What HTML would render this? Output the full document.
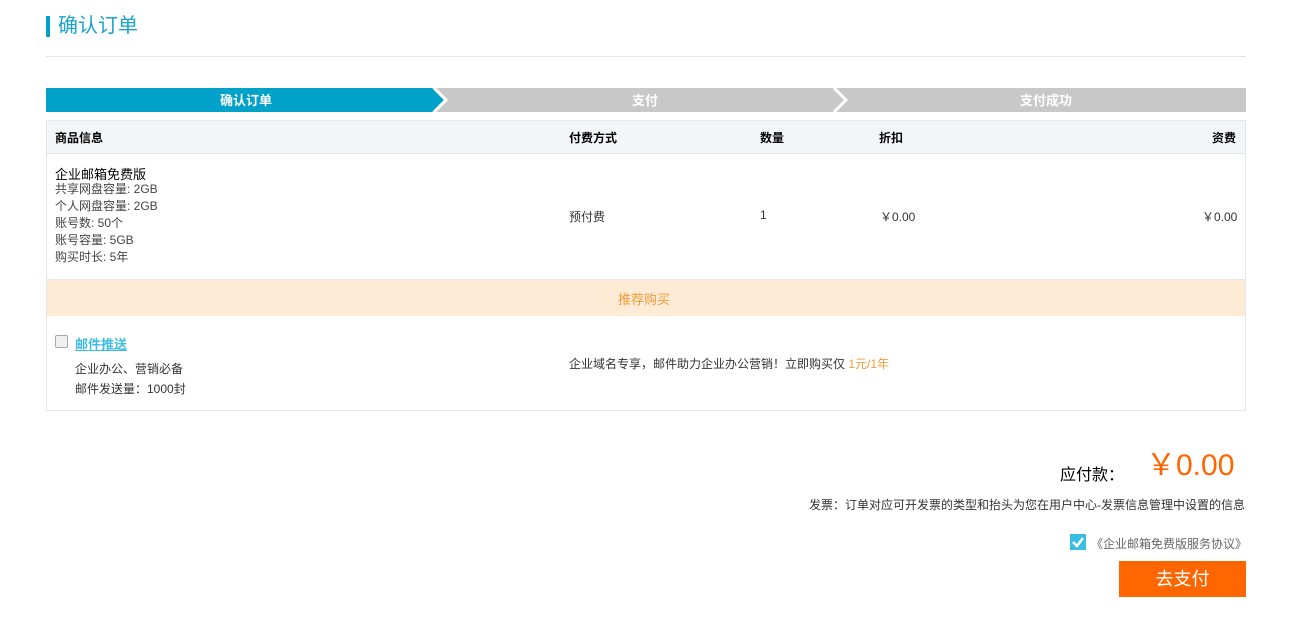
<!DOCTYPE html>
<html><head><meta charset="utf-8"><style>
*{margin:0;padding:0;box-sizing:border-box}
body{width:1297px;height:625px;background:#fff;font-family:"Liberation Sans","Noto Sans CJK SC",sans-serif;font-size:12px;color:#333;position:relative;overflow:hidden}
.a{position:absolute;white-space:nowrap}
</style></head><body>
<div class="a" style="left:46px;top:16px;width:4px;height:21px;background:#00a0c8"></div>
<div class="a" style="left:58px;top:13px;font-size:20px;color:#1aa3cc;line-height:26px">确认订单</div>
<div class="a" style="left:46px;top:56px;width:1200px;height:1px;background:#e6e6e6"></div>

<svg class="a" style="left:46px;top:88px" width="1200" height="24">
<rect x="0" y="0" width="1200" height="24" fill="#c8c8c8"/>
<polygon points="0,0 386,0 398,12 386,24 0,24" fill="#00a2c9"/>
<polyline points="388,0 400,12 388,24" fill="none" stroke="#fff" stroke-width="3"/>
<polyline points="788,0 800,12 788,24" fill="none" stroke="#fff" stroke-width="3"/>
<text x="200" y="17" fill="#fff" font-size="13" font-weight="bold" text-anchor="middle" font-family="Liberation Sans,Noto Sans CJK SC,sans-serif">确认订单</text>
<text x="599" y="17" fill="#fff" font-size="13" font-weight="bold" text-anchor="middle" font-family="Liberation Sans,Noto Sans CJK SC,sans-serif">支付</text>
<text x="1000" y="17" fill="#fff" font-size="13" font-weight="bold" text-anchor="middle" font-family="Liberation Sans,Noto Sans CJK SC,sans-serif">支付成功</text>
</svg>

<div class="a" style="left:46px;top:120px;width:1200px;height:291px;border:1px solid #e3e6eb"></div>
<div class="a" style="left:47px;top:121px;width:1198px;height:33px;background:#f4f5f8;border-bottom:1px solid #e3e6eb"></div>
<div class="a" style="left:55px;top:129px;font-weight:bold;color:#000">商品信息</div>
<div class="a" style="left:569px;top:129px;font-weight:bold;color:#000">付费方式</div>
<div class="a" style="left:760px;top:129px;font-weight:bold;color:#000">数量</div>
<div class="a" style="left:879px;top:129px;font-weight:bold;color:#000">折扣</div>
<div class="a" style="left:1212px;top:129px;font-weight:bold;color:#000">资费</div>

<div class="a" style="left:55px;top:166px;font-size:13px;color:#000;line-height:17px">企业邮箱免费版</div>
<div class="a" style="left:55px;top:181px;line-height:17px;color:#444">共享网盘容量: 2GB<br>个人网盘容量: 2GB<br>账号数: 50个<br>账号容量: 5GB<br>购买时长: 5年</div>
<div class="a" style="left:569px;top:208px">预付费</div>
<div class="a" style="left:760px;top:208px">1</div>
<div class="a" style="left:880px;top:208px">￥0.00</div>
<div class="a" style="left:1202px;top:208px">￥0.00</div>

<div class="a" style="left:47px;top:279px;width:1198px;height:37px;background:#fdebd6;border-top:1px solid #e3e6eb"></div>
<div class="a" style="left:618px;top:289px;color:#f29c38;font-size:13px">推荐购买</div>

<div class="a" style="left:55px;top:335px;width:13px;height:13px;border:1px solid #aaa;border-radius:2px;background:#f0f0f0"></div>
<div class="a" style="left:75px;top:334px;font-size:13px;font-weight:bold;color:#3dbde2;text-decoration:underline">邮件推送</div>
<div class="a" style="left:75px;top:359px;line-height:20px">企业办公、营销必备<br>邮件发送量：1000封</div>
<div class="a" style="left:569px;top:355px">企业域名专享，邮件助力企业办公营销！立即购买仅 <span style="color:#f29c38">1元/1年</span></div>

<div class="a" style="left:1060px;top:461px;font-size:16px;color:#000">应付款：</div>
<div class="a" style="left:1146px;top:448px;font-size:30px;color:#ff6600;line-height:36px">￥0.00</div>
<div class="a" style="right:52px;top:496px;color:#333">发票：订单对应可开发票的类型和抬头为您在用户中心-发票信息管理中设置的信息</div>
<svg class="a" style="left:1070px;top:534px" width="16" height="16"><rect width="16" height="16" fill="#3cbde4"/><polyline points="3,8 7,12 13,4" fill="none" stroke="#fff" stroke-width="2.5"/></svg>
<div class="a" style="left:1091px;top:535px;color:#666">《企业邮箱免费版服务协议》</div>
<div class="a" style="left:1119px;top:561px;width:127px;height:36px;background:#ff6600;color:#fff;font-size:18px;text-align:center;line-height:36px">去支付</div>
</body></html>
